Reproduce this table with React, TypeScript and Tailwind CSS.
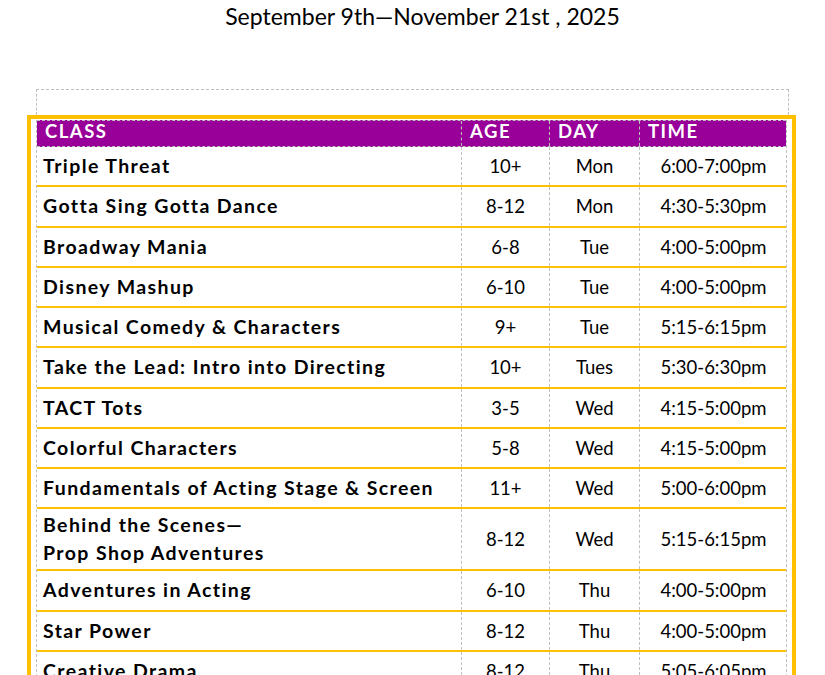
type Row = {
  name: string[];
  age: string;
  day: string;
  time: string;
};

const rows: Row[] = [
  { name: ["Triple Threat"], age: "10+", day: "Mon", time: "6:00-7:00pm" },
  { name: ["Gotta Sing Gotta Dance"], age: "8-12", day: "Mon", time: "4:30-5:30pm" },
  { name: ["Broadway Mania"], age: "6-8", day: "Tue", time: "4:00-5:00pm" },
  { name: ["Disney Mashup"], age: "6-10", day: "Tue", time: "4:00-5:00pm" },
  { name: ["Musical Comedy & Characters"], age: "9+", day: "Tue", time: "5:15-6:15pm" },
  { name: ["Take the Lead: Intro into Directing"], age: "10+", day: "Tues", time: "5:30-6:30pm" },
  { name: ["TACT Tots"], age: "3-5", day: "Wed", time: "4:15-5:00pm" },
  { name: ["Colorful Characters"], age: "5-8", day: "Wed", time: "4:15-5:00pm" },
  { name: ["Fundamentals of Acting Stage & Screen"], age: "11+", day: "Wed", time: "5:00-6:00pm" },
  { name: ["Behind the Scenes—", "Prop Shop Adventures"], age: "8-12", day: "Wed", time: "5:15-6:15pm" },
  { name: ["Adventures in Acting"], age: "6-10", day: "Thu", time: "4:00-5:00pm" },
  { name: ["Star Power"], age: "8-12", day: "Thu", time: "4:00-5:00pm" },
  { name: ["Creative Drama"], age: "8-12", day: "Thu", time: "5:05-6:05pm" },
  { name: ["Improv Lab"], age: "10+", day: "Fri", time: "4:00-5:00pm" },
];

const cols = "grid grid-cols-[425px_88px_90px_147px]";
const dash = "border-dashed border-[#bfbfbf]";

export default function App() {
  return (
    <div className="w-[825px] h-[675px] overflow-hidden bg-white">
      <div className="pl-5 pt-0 text-center text-[23px] leading-[32px] text-black font-['Lato',sans-serif]">
        September 9th—November 21st , 2025
      </div>

      <div className={`mt-[57px] ml-[36px] w-[753px] h-[26px] border-x border-t ${dash}`} />

      <div className="ml-[27px] w-[769px] border-4 border-[#ffc000] px-[5px] pt-[1px]">
        <div className={`border-x ${dash} font-['Lato',sans-serif] text-black`}>
          <div className={`${cols} bg-[#990099] text-white font-bold text-[18.5px] tracking-[1.5px] leading-[21px] border-y ${dash}`}>
            <div className={`pl-2 pb-[4px] border-r ${dash}`}>CLASS</div>
            <div className={`pl-2 pb-[4px] border-r ${dash}`}>AGE</div>
            <div className={`pl-2 pb-[4px] border-r ${dash}`}>DAY</div>
            <div className="pl-2 pb-[4px]">TIME</div>
          </div>

          {rows.map((row) => (
            <div key={row.name.join(" ")} className={`${cols} border-b-2 border-[#ffc000] text-[18.5px] leading-[28px]`}>
              <div className={`min-h-[38.25px] py-[2px] pl-[6px] flex flex-col justify-center font-bold text-[19.5px] tracking-[1.4px] border-r ${dash}`}>
                {row.name.map((line) => (
                  <div key={line}>{line}</div>
                ))}
              </div>
              <div className={`flex items-center justify-center border-r ${dash}`}>{row.age}</div>
              <div className={`flex items-center justify-center border-r ${dash}`}>{row.day}</div>
              <div className="flex items-center justify-center">{row.time}</div>
            </div>
          ))}
        </div>
      </div>
    </div>
  );
}
